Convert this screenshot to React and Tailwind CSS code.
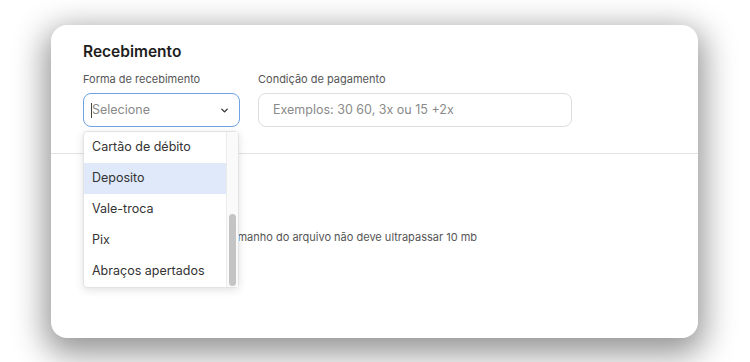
import React from "react";

const items = ["Cartão de débito", "Deposito", "Vale-troca", "Pix", "Abraços apertados"];

export default function App() {
  return (
    <div className="w-[750px] h-[362px] bg-white overflow-hidden pt-[25px] pl-[51px]" style={{ fontFamily: "Inter, 'Liberation Sans', sans-serif" }}>
      <div className="w-[647px] h-[313px] bg-white rounded-[16px] shadow-[0_10px_32px_6px_rgba(0,0,0,0.42)] pt-[17px]">
        <div className="px-[32px]">
          <h2 className="text-[15.5px] leading-[20px] font-semibold text-[#1e1e1e]">Recebimento</h2>
          <div className="flex gap-[18px] mt-[10px]">
            <div className="w-[157px] flex flex-col">
              <label className="text-[11px] leading-[14px] text-[#555]">Forma de recebimento</label>
              <div className="relative mt-[7px]">
                <div className="h-[34px] rounded-[8px] border-[1.5px] border-[#6fa2e2] flex items-center pl-[7px] pr-[9px]">
                  <span className="w-px h-[15px] bg-[#444]" />
                  <span className="text-[12.5px] text-[#8a8a8a] flex-1">Selecione</span>
                  <svg width="11" height="11" viewBox="0 0 24 24" fill="none" stroke="#333" strokeWidth="3" strokeLinecap="round" strokeLinejoin="round"><path d="M6 9l6 6 6-6" /></svg>
                </div>
                <div className="absolute left-0 top-[38px] w-[156px] bg-white border border-[#e3e3e3] rounded-[4px] shadow-[0_2px_8px_rgba(0,0,0,0.12)] flex z-10">
                  <div className="flex-1 flex flex-col">
                    {items.map((it, i) => (
                      <div key={it} className={"h-[31px] flex items-center pl-[8px] text-[12.5px] text-[#333] " + (i === 1 ? "bg-[#dfe9fa]" : "")}>{it}</div>
                    ))}
                  </div>
                  <div className="w-[12px] border-l border-[#ececec] bg-[#fafafa] flex flex-col justify-end items-center pb-[1px]">
                    <div className="w-[7px] h-[72px] rounded-full bg-[#c4c4c4]" />
                  </div>
                </div>
              </div>
            </div>
            <div className="w-[314px] flex flex-col">
              <label className="text-[11px] leading-[14px] text-[#555]">Condição de pagamento</label>
              <div className="mt-[7px] h-[34px] rounded-[8px] border border-[#dedede] flex items-center pl-[14px]">
                <span className="text-[12.5px] text-[#8a8a8a]">Exemplos: 30 60, 3x ou 15 +2x</span>
              </div>
            </div>
          </div>
        </div>
        <div className="h-px bg-[#e2e2e2] mt-[26px]" />
        <div className="px-[32px] pt-[68px] flex items-center">
          <div className="w-[128px] h-[30px] mr-[14px]" />
          <span className="text-[11px] leading-[14px] text-[#555]">Tamanho do arquivo não deve ultrapassar 10 mb</span>
        </div>
      </div>
    </div>
  );
}
